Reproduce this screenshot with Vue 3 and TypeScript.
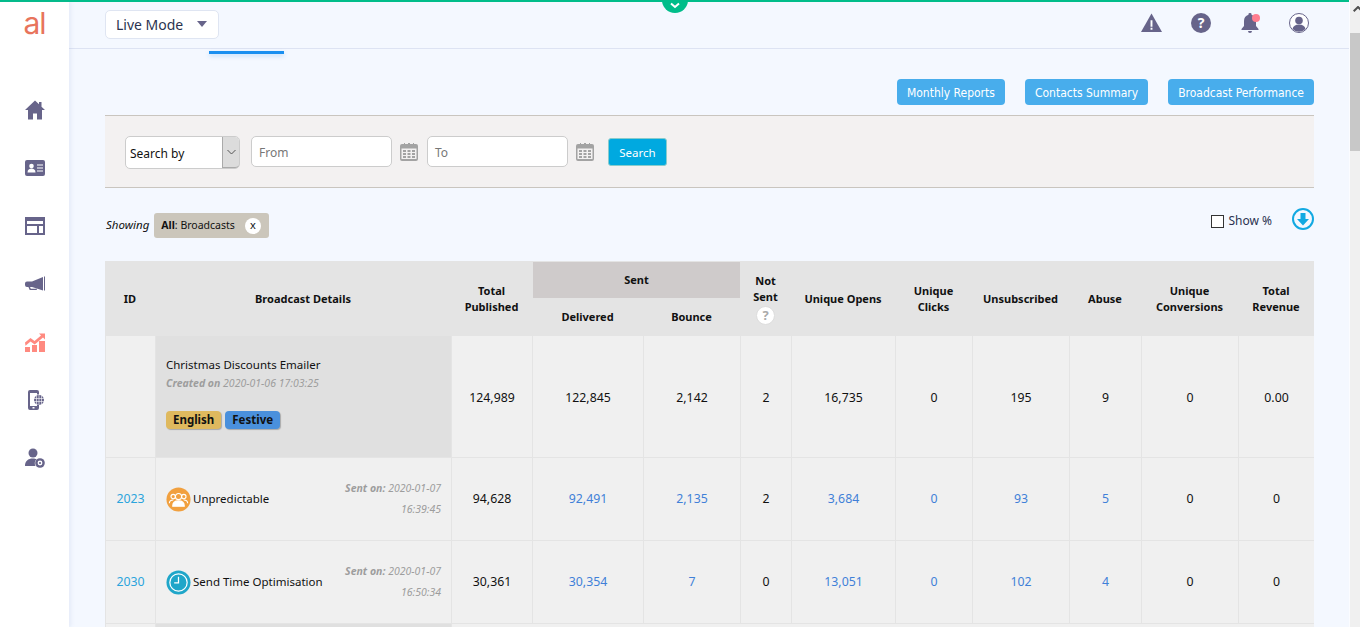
<script setup lang="ts">
interface Row {
  id: string; name: string; kind: 'people' | 'clock'; date: string; time: string;
  pub: string; del: string; bou: string; ns: string; op: string; cl: string; un: string; ab: string; co: string; rev: string;
}
const rows: Row[] = [
  { id: '2023', name: 'Unpredictable', kind: 'people', date: '2020-01-07', time: '16:39:45', pub: '94,628', del: '92,491', bou: '2,135', ns: '2', op: '3,684', cl: '0', un: '93', ab: '5', co: '0', rev: '0' },
  { id: '2030', name: 'Send Time Optimisation', kind: 'clock', date: '2020-01-07', time: '16:50:34', pub: '30,361', del: '30,354', bou: '7', ns: '0', op: '13,051', cl: '0', un: '102', ab: '4', co: '0', rev: '0' },
];
const parent = ['124,989', '122,845', '2,142', '2', '16,735', '0', '195', '9', '0', '0.00'];
const widths = [50, 296, 81, 111, 97, 51, 104, 77, 97, 72, 97, 76];
const reports = ['Monthly Reports', 'Contacts Summary', 'Broadcast Performance'];
</script>

<template>
  <div class="app">
    <div class="page">
      <div class="greenbar"><span class="pull"><svg width="12" height="8" viewBox="0 0 12 8"><path d="M2 1.500l4 3.500 4-3.500" fill="none" stroke="#fff" stroke-width="2"/></svg></span></div>
      <div class="body">
        <aside class="side">
          <div class="logo">al</div>
          <nav class="nav">
            <svg viewBox="0 0 20 20" class="ic"><path d="M10 .5L0 10h3v9.500h5v-6h4v6h5V10h3l-3.500-3.300V2h-2.500v2.300z"/></svg>
            <svg viewBox="0 0 20 20" class="ic"><rect y="2" width="20" height="16" rx="2"/><circle cx="6.500" cy="8" r="2.300" fill="#fff"/><path d="M2.500 14.500c0-3 2-4 4-4s4 1 4 4zM12 6.500h6v1.100h-6zM12 9.500h6v1.100h-6zM12 12.500h6v1.100h-6z" fill="#fff"/></svg>
            <svg viewBox="0 0 20 20" class="ic"><path fill-rule="evenodd" d="M0 1h20v18H0zM2 5v3h16V5zM2 10v7h10v-7zM14 10v7h4v-7z"/></svg>
            <svg viewBox="0 0 20 20" class="ic"><path d="M19 2.500h1v14h-1zM18 3v13.500L7 13H5l.8 1.800h6v1.300H4.700L3.400 13H2A2 2 0 0 1 0 11V9.500A2 2 0 0 1 2 7.500h5z"/></svg>
            <svg viewBox="0 0 20 20" class="ic red"><path d="M0 15h5v5H0zM7 13h5v7H7zM14 9h6v11h-6zM0 10.500l5.500-4.500 4 3L16 3.500 14 1.500h6v6l-2-2-8.300 7-4.200-3-5 4.200z"/></svg>
            <svg viewBox="0 0 20 20" class="ic"><path fill-rule="evenodd" d="M5 0h7a2 2 0 0 1 2 2v2.500h-2V3H5v13h7v-1h2v3a2 2 0 0 1-2 2H5a2 2 0 0 1-2-2V2a2 2 0 0 1 2-2zm2.500 17v1.500h2V17z"/><circle cx="14" cy="10" r="5"/><path d="M9 8.500h10M9 11.500h10M14 5v10M11.500 5.500v9M16.500 5.500v9" stroke="#fff" stroke-width=".6"/></svg>
            <svg viewBox="0 0 20 20" class="ic"><circle cx="8" cy="5" r="4.500"/><path d="M0 18c0-5 3-7.500 8-7.500 1.500 0 2.500.2 3.500.7a6 6 0 0 0-1 6.800z"/><circle cx="15" cy="15" r="4.800"/><circle cx="15" cy="15" r="2.400" fill="#fff"/><circle cx="15" cy="15" r="1.100"/></svg>
          </nav>
        </aside>

        <main class="main">
          <header class="top">
            <button class="mode">Live Mode<i class="caret"></i></button>
            <div class="top-icons">
              <svg viewBox="0 0 22 20" class="ti wide"><path d="M11 0L0 19.500h22z"/><path d="M10 7h2v7h-2zM10 15h2v2h-2z" fill="#fff"/></svg>
              <svg viewBox="0 0 20 20" class="ti"><circle cx="10" cy="10" r="10"/><text x="10" y="15" text-anchor="middle" class="qm">?</text></svg>
              <span class="bell"><svg viewBox="0 0 20 20" class="ti"><path d="M10 0a1.500 1.500 0 0 1 1.500 1.800C14.500 2.600 16 5 16 8v5l2.500 3v1h-17v-1L4 13V8c0-3 1.500-5.400 4.500-6.200A1.500 1.500 0 0 1 10 0zM8 18h4a2 2 0 0 1-4 0z"/></svg><i class="dot"></i></span>
              <svg viewBox="0 0 20 20" class="ti"><circle cx="10" cy="10" r="9.500" fill="#fff" stroke="#67648a"/><circle cx="10" cy="7.500" r="3.800"/><path d="M3.500 16c.5-3 3-4.500 6.500-4.500s6 1.500 6.500 4.500a9 9 0 0 1-13 0z"/></svg>
            </div>
          </header>
          <div class="tabline"><span class="tabmark"></span></div>

          <section class="content">
            <div class="actions"><button v-for="r in reports" :key="r" class="btn">{{ r }}</button></div>

            <div class="filter">
              <div class="select"><span>Search by</span><b class="sel-arrow"><svg width="9" height="6" viewBox="0 0 9 6"><path d="M.5 1l4 4 4-4" fill="none" stroke="#555"/></svg></b></div>
              <div class="input">From</div>
              <svg class="cal" viewBox="0 0 18 19"><path fill="#a3a3a3" fill-rule="evenodd" d="M2 2h2V1h1v1h3V1h2v1h3V1h1v1h2a2 2 0 0 1 2 2v13a2 2 0 0 1-2 2H2a2 2 0 0 1-2-2V4a2 2 0 0 1 2-2zM1.500 6.500V17h15V6.500zM3 8h3v2H3zM7.500 8h3v2h-3zM12 8h3v2h-3zM3 11h3v2H3zM7.500 11h3v2h-3zM12 11h3v2h-3zM3 14h3v2H3zM7.500 14h3v2h-3zM12 14h3v2h-3z"/></svg>
              <div class="input to">To</div>
              <svg class="cal" viewBox="0 0 18 19"><path fill="#a3a3a3" fill-rule="evenodd" d="M2 2h2V1h1v1h3V1h2v1h3V1h1v1h2a2 2 0 0 1 2 2v13a2 2 0 0 1-2 2H2a2 2 0 0 1-2-2V4a2 2 0 0 1 2-2zM1.500 6.500V17h15V6.500zM3 8h3v2H3zM7.500 8h3v2h-3zM12 8h3v2h-3zM3 11h3v2H3zM7.500 11h3v2h-3zM12 11h3v2h-3zM3 14h3v2H3zM7.500 14h3v2h-3zM12 14h3v2h-3z"/></svg>
              <button class="search">Search</button>
            </div>

            <div class="showing">
              <em>Showing</em>
              <span class="chip"><b>All</b>: Broadcasts<i class="x">x</i></span>
              <label class="pct"><span class="box"></span>Show %</label>
              <svg class="dl" viewBox="0 0 22 22"><circle cx="11" cy="11" r="10" fill="none" stroke="#12a9e2" stroke-width="2"/><path d="M8.500 5h5v6h3.500L11 17.500 5 11h3.500z" fill="#12a9e2"/></svg>
            </div>

            <table class="tbl">
              <colgroup><col v-for="(w, i) in widths" :key="i" :style="{ width: w + 'px' }" /></colgroup>
              <thead>
                <tr class="h1">
                  <th rowspan="2">ID</th>
                  <th rowspan="2">Broadcast Details</th>
                  <th rowspan="2">Total<br />Published</th>
                  <th colspan="2" class="sent">Sent</th>
                  <th rowspan="2" class="ns">Not<br />Sent<span class="help">?</span></th>
                  <th rowspan="2">Unique Opens</th>
                  <th rowspan="2">Unique<br />Clicks</th>
                  <th rowspan="2">Unsubscribed</th>
                  <th rowspan="2">Abuse</th>
                  <th rowspan="2">Unique<br />Conversions</th>
                  <th rowspan="2">Total<br />Revenue</th>
                </tr>
                <tr class="h2"><th>Delivered</th><th>Bounce</th></tr>
              </thead>
              <tbody>
                <tr class="parent">
                  <td></td>
                  <td class="det">
                    <div class="det-name">Christmas Discounts Emailer</div>
                    <div class="det-date"><b>Created on</b> 2020-01-06 17:03:25</div>
                    <div class="tags"><span class="tag en">English</span><span class="tag fe">Festive</span></div>
                  </td>
                  <td v-for="(v, i) in parent" :key="i" class="num">{{ v }}</td>
                </tr>
                <tr v-for="r in rows" :key="r.id" class="child">
                  <td class="up1"><a class="idl">{{ r.id }}</a></td>
                  <td class="info">
                    <div class="info-in">
                      <svg v-if="r.kind === 'people'" class="av" viewBox="0 0 26 26"><circle cx="13" cy="13" r="12.500" fill="#f1a03f"/><g fill="none" stroke="#fff" stroke-width="1.200"><circle cx="13" cy="10" r="3.200"/><path d="M7 20c0-4 2.500-5.500 6-5.500s6 1.500 6 5.500z" fill="#fff"/><circle cx="7.500" cy="10" r="2.300"/><circle cx="18.500" cy="10" r="2.300"/><path d="M3.500 17c0-2.500 1.500-3.500 4-3.500M22.500 17c0-2.500-1.500-3.500-4-3.500"/></g></svg>
                      <svg v-else class="av" viewBox="0 0 26 26"><circle cx="13" cy="13" r="12.500" fill="#1fa6c9"/><circle cx="13" cy="13" r="9" fill="none" stroke="#fff" stroke-width="1.300"/><path d="M13 7v6.500H8.500" fill="none" stroke="#fff" stroke-width="1.300"/></svg>
                      <span class="nm">{{ r.name }}</span>
                      <span class="sent-on"><b>Sent on:</b> {{ r.date }}<br />{{ r.time }}</span>
                    </div>
                  </td>
                  <td class="up1">{{ r.pub }}</td>
                  <td class="up1"><a class="lnk">{{ r.del }}</a></td>
                  <td class="up1"><a class="lnk">{{ r.bou }}</a></td>
                  <td class="up1">{{ r.ns }}</td>
                  <td class="up1"><a class="lnk">{{ r.op }}</a></td>
                  <td class="up1"><a class="lnk">{{ r.cl }}</a></td>
                  <td class="up1"><a class="lnk">{{ r.un }}</a></td>
                  <td class="up1"><a class="lnk">{{ r.ab }}</a></td>
                  <td class="up1">{{ r.co }}</td>
                  <td class="up1">{{ r.rev }}</td>
                </tr>
                <tr class="parent next"><td></td><td class="det"></td><td colspan="10"></td></tr>
              </tbody>
            </table>
          </section>
        </main>
      </div>
    </div>
    <div class="scroll">
      <div class="up"><svg width="10" height="6" viewBox="0 0 10 6"><path d="M.7 5.300L5 1l4.300 4.300" fill="none" stroke="#505050" stroke-width="2"/></svg></div>
      <div class="thumb"></div>
    </div>
  </div>
</template>

<style>
html, body { margin: 0; overflow: hidden; }
</style>

<style scoped>
.app { display: flex; height: 627px; overflow: hidden; background: #f4f8ff; font-family: "Noto Sans", "Open Sans", sans-serif; color: #111; }
.page { flex: 1; min-width: 0; display: flex; flex-direction: column; position: relative; }
.greenbar { height: 2px; background: #00bd8a; flex: none; }
.pull { position: absolute; left: 662px; top: -13px; width: 26px; height: 26px; border-radius: 50%; background: #00bd8a; display: flex; align-items: flex-end; justify-content: center; }
.pull svg { margin-bottom: 3px; }
.body { flex: 1; display: flex; min-height: 0; }
.side { width: 69px; flex: none; background: #fff; box-shadow: 2px 0 4px rgba(120, 140, 200, .12); display: flex; flex-direction: column; align-items: center; position: relative; z-index: 1; }
.logo { height: 44px; font-family: Inter, sans-serif; font-size: 30px; font-weight: 400; line-height: 42px; color: #e8745c; letter-spacing: -1px; }
.nav { display: flex; flex-direction: column; gap: 38px; margin-top: 54px; }
.ic { width: 20px; height: 20px; display: block; fill: #67648a; }
.red { fill: #ff8a80; }
.main { flex: 1; min-width: 0; overflow: hidden; }
.top { height: 46px; border-bottom: 1px solid #dde3f3; display: flex; align-items: center; justify-content: space-between; padding: 0 35px 0 36px; }
.mode { width: 114px; height: 29px; background: #fff; border: 1px solid #dfe5f2; border-radius: 5px; font: 14px "Noto Sans", sans-serif; color: #2b3350; text-align: left; padding: 0 0 0 10px; display: flex; align-items: center; justify-content: space-between; margin-bottom: 2px; }
.caret { width: 0; height: 0; border: 5px solid transparent; border-top: 6px solid #67648a; border-bottom: 0; margin-right: 11px; }
.top-icons { display: flex; align-items: center; gap: 29px; margin-right: 5px; margin-bottom: 5px; }
.ti { width: 20px; height: 20px; display: block; fill: #67648a; }
.ti.wide { width: 21px; }
.qm { font: bold 14px "Noto Sans", sans-serif; fill: #fff; }
.bell { position: relative; display: block; }
.dot { position: absolute; right: 0; top: 1px; width: 8px; height: 8px; border-radius: 50%; background: #ff7d8f; }
.tabline { height: 5px; padding-left: 140px; }
.tabmark { display: block; width: 75px; height: 3px; margin-top: 2px; background: #1a8ff0; box-shadow: 0 2px 4px rgba(30, 140, 240, .25); }
.content { padding: 0 35px 0 36px; }
.actions { display: flex; justify-content: flex-end; gap: 20px; margin-top: 23px; }
.btn { height: 26px; padding: 1px 10px 0; background: #48adec; color: #fff; border: 0; border-radius: 4px; font: 12px "DejaVu Sans", sans-serif; font-stretch: condensed; }
.filter { margin-top: 10px; height: 71px; background: #f3f1f1; border-top: 1px solid #c9c5bf; border-bottom: 1px solid #c9c5bf; display: flex; align-items: center; padding-left: 20px; }
.select { height: 31px; width: 109px; margin-top: 1px; border: 1px solid #ccc; border-radius: 5px; background: #fff; display: flex; justify-content: space-between; font-size: 12px; line-height: 34px; padding-left: 4px; }
.sel-arrow { width: 16px; background: #dcdcdc; border: 1px solid #aaa; border-width: 0 0 1px 1px; display: flex; align-items: center; justify-content: center; border-radius: 0 4px 4px 0; }
.input { width: 132px; height: 29px; margin-left: 11px; padding-left: 7px; border: 1px solid #ccc; border-radius: 5px; background: #fff; font-size: 12px; line-height: 32px; color: #777; }
.cal { width: 18px; height: 19px; margin-left: 8px; }
.input.to { margin-left: 9px; }
.search { width: 59px; height: 28px; margin-left: 14px; background: #00a9e0; border: 1px solid #8cc; border-radius: 3px; color: #fff; font: 11.500px "Noto Sans", sans-serif; padding: 1px 0 0; }
.showing { display: flex; align-items: flex-start; height: 73px; padding-top: 25px; box-sizing: border-box; }
.showing em { margin: 4px 5px 0 1px; font-size: 11.500px; }
.chip { height: 25px; width: 115px; box-sizing: border-box; background: #cbc6bb; border-radius: 3px; padding-left: 7px; font-size: 10.500px; line-height: 25px; display: flex; align-items: center; }
.x { width: 16px; height: 16px; margin-left: 10px; background: #fff; border-radius: 50%; text-align: center; line-height: 14px; font-style: normal; font-size: 11px; }
.pct { margin-left: auto; display: flex; align-items: center; font-size: 12px; color: #2b3350; line-height: 14px; margin-top: 1px; }
.box { width: 11px; height: 11px; border: 1px solid #333; margin-right: 4px; background: #fff; }
.dl { width: 22px; height: 22px; margin-left: 20px; margin-top: -5px; }
.tbl { width: 1209px; table-layout: fixed; border-collapse: separate; border-spacing: 0; font-size: 12.300px; text-align: center; }
.tbl th { background: #e4e4e4; font-weight: 700; font-size: 11px; line-height: 16px; padding: 0 2px; color: #111; }
.h1 { height: 37px; }
.h2 { height: 38px; }
.tbl .sent { background: #cfcbcb; border-top: 1px solid #e4e4e4; border-left: 1px solid #e4e4e4; }
.help { display: block; width: 19px; height: 19px; margin: 1px auto 0; background: #fff; border: 1px solid #ddd; border-radius: 50%; box-sizing: border-box; color: #aaa; font-size: 13px; line-height: 17px; }
.tbl td { background: #f0f0f0; border-left: 1px solid #e4e4e4; border-bottom: 1px solid #e4e4e4; padding: 0; }
.tbl td.num { padding-top: 2px; }
.tbl td.up1 { padding-bottom: 2px; }
.parent { height: 122px; }
.child { height: 83px; }
.next { height: 40px; }
.tbl .det { background: #e0e0e0; text-align: left; padding: 0 10px; vertical-align: top; }
.det-name { margin-top: 20px; line-height: 17px; font-size: 11.500px; }
.det-date { margin-top: 3px; font-size: 10.500px; line-height: 15px; font-style: italic; color: #9d9d9d; }
.tags { display: flex; gap: 4px; margin-top: 20px; }
.tag { height: 18px; padding: 0 7px; border-radius: 4px; font-size: 11.500px; font-weight: 700; line-height: 18px; box-shadow: 1px 1px 1px #aaa; }
.en { background: #dfb95e; }
.fe { background: #4a90dc; }
.idl { color: #2ba4dc; }
.lnk { color: #4080d8; }
.tbl .info { padding: 0 10px; }
.info-in { display: flex; align-items: center; text-align: left; }
.av { width: 25px; height: 25px; flex: none; margin-right: 2px; }
.nm { white-space: nowrap; font-size: 11.500px; margin-bottom: 2px; }
.sent-on { margin-left: auto; text-align: right; font-style: italic; font-size: 10.500px; line-height: 21px; color: #9d9d9d; white-space: nowrap; }
.scroll { width: 10px; flex: none; background: #f0f0f0; border-left: 1px solid #fbfcff; overflow: hidden; }
.up { height: 17px; display: flex; align-items: center; padding-left: 3px; }
.up svg { flex: none; }
.thumb { height: 118px; margin-top: 16px; background: #c8c8c8; }
</style>
